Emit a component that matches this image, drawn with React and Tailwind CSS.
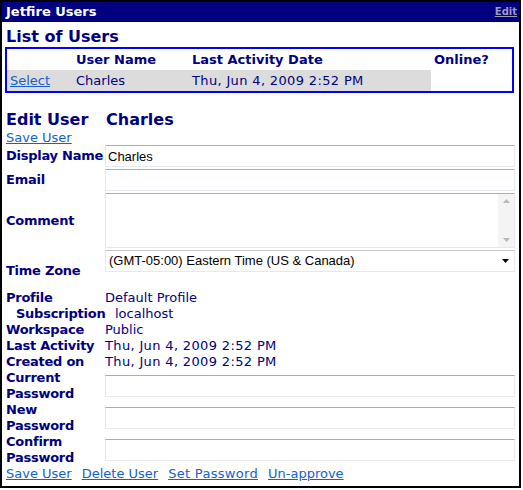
import React from "react";

const inputCls =
  "h-[22px] w-[410px] border border-[#e3e9ef] border-t-[#abadb3] bg-white px-[2px] font-['Liberation_Sans',Arial,sans-serif] text-[13px] text-black outline-none";

function Label({ children, className = "" }) {
  return (
    <div className={"w-[99px] shrink-0 whitespace-nowrap font-bold leading-[16px] tracking-[-0.25px] " + className}>
      {children}
    </div>
  );
}

function InputRow({ label, value = "", className = "" }) {
  return (
    <div className={"flex items-center " + className}>
      <Label>{label}</Label>
      <input className={inputCls} defaultValue={value} />
    </div>
  );
}

function InfoRow({ label, children, className = "" }) {
  return (
    <div className={"flex h-[16px] " + className}>
      <Label>{label}</Label>
      <div className="whitespace-nowrap">{children}</div>
    </div>
  );
}

export default function App() {
  return (
    <div className="w-[521px] h-[488px] border-2 border-black bg-white font-['DejaVu_Sans',Verdana,sans-serif] text-[13px] text-[#000080] overflow-hidden">
      <div className="h-[20px] bg-[#000080] border-b border-black flex items-center justify-between pl-[4px] pr-[2px]">
        <span className="text-white font-bold leading-[16px]">Jetfire Users</span>
        <a href="#" className="text-[10px] font-bold text-[#9c9cbc] underline leading-[12px]">Edit</a>
      </div>

      <div className="pl-[3px]">
        <h2 className="pl-[1px] mt-[5px] text-[16px] font-bold leading-[20px]">List of Users</h2>

        <table className="w-[509px] border-2 border-[#0000ff] border-separate border-spacing-0 table-fixed">
          <colgroup>
            <col className="w-[66px]" />
            <col className="w-[116px]" />
            <col className="w-[242px]" />
            <col />
          </colgroup>
          <thead>
            <tr className="h-[21px]">
              <th className="p-0 pl-[3px]"></th>
              <th className="p-0 pl-[3px] text-left font-bold whitespace-nowrap">User Name</th>
              <th className="p-0 pl-[3px] text-left font-bold whitespace-nowrap">Last Activity Date</th>
              <th className="p-0 pl-[3px] text-left font-bold whitespace-nowrap">Online?</th>
            </tr>
          </thead>
          <tbody>
            <tr className="h-[21px]">
              <td className="p-0 pl-[3px] bg-[#dcdcdc]">
                <a href="#" className="text-[#1560d0] underline">Select</a>
              </td>
              <td className="p-0 pl-[3px] bg-[#dcdcdc]">Charles</td>
              <td className="p-0 pl-[3px] bg-[#dcdcdc] whitespace-nowrap tracking-[0.35px]">Thu, Jun 4, 2009 2:52 PM</td>
              <td className="p-0"></td>
            </tr>
          </tbody>
        </table>

        <div className="pl-[1px]">
          <div className="flex mt-[17px] text-[16px] font-bold leading-[20px]">
            <div className="w-[100px] shrink-0 whitespace-nowrap">Edit User</div>
            <div>Charles</div>
          </div>
          <div className="leading-[15px] h-[15px]">
            <a href="#" className="text-[#1560d0] underline">Save User</a>
          </div>

          <div className="flex flex-col gap-[2px]">
            <InputRow label="Display Name" value="Charles" />
            <InputRow label="Email" />
            <div className="flex items-center">
              <Label>Comment</Label>
              <div className="h-[55px] w-[410px] flex border border-[#e3e9ef] border-t-[#abadb3] bg-white">
                <textarea className="flex-1 resize-none outline-none font-['Liberation_Sans',Arial,sans-serif] text-[13px] text-black"></textarea>
                <div className="w-[16px] bg-[#f4f4f4] flex flex-col justify-between items-center py-[5px]">
                  <svg width="7" height="4" viewBox="0 0 7 4"><path d="M0 4 L3.5 0 L7 4 Z" fill="#b8b8b8" /></svg>
                  <svg width="7" height="4" viewBox="0 0 7 4"><path d="M0 0 L3.5 4 L7 0 Z" fill="#b8b8b8" /></svg>
                </div>
              </div>
            </div>
            <div className="flex h-[40px]">
              <Label className="self-center pt-[2px]">Time Zone</Label>
              <div className="h-[22px] w-[410px] flex items-center justify-between border border-[#e3e9ef] border-t-[#c4c6cc] bg-white pl-[3px] pr-[5px] font-['Liberation_Sans',Arial,sans-serif] text-[13px] text-black">
                <span className="whitespace-nowrap">(GMT-05:00) Eastern Time (US &amp; Canada)</span>
                <svg width="7" height="4" viewBox="0 0 7 4"><path d="M0 0 L3.5 4 L7 0 Z" fill="#000" /></svg>
              </div>
            </div>
          </div>

          <div className="leading-[16px]">
            <InfoRow label="Profile">Default Profile</InfoRow>
            <InfoRow label="Subscription" className="pl-[10px]">localhost</InfoRow>
            <InfoRow label="Workspace">Public</InfoRow>
            <InfoRow label="Last Activity"><span className="tracking-[0.35px]">Thu, Jun 4, 2009 2:52 PM</span></InfoRow>
            <InfoRow label="Created on"><span className="tracking-[0.35px]">Thu, Jun 4, 2009 2:52 PM</span></InfoRow>
          </div>

          <InputRow label={<>Current<br />Password</>} className="h-[32px]" />
          <InputRow label={<>New<br />Password</>} className="h-[32px]" />
          <InputRow label={<>Confirm<br />Password</>} className="h-[32px]" />

          <div className="flex gap-[10px] leading-[16px] whitespace-nowrap">
            <a href="#" className="text-[#1560d0] underline">Save User</a>
            <a href="#" className="text-[#1560d0] underline">Delete User</a>
            <a href="#" className="text-[#1560d0] underline tracking-[0.3px]">Set Password</a>
            <a href="#" className="text-[#1560d0] underline">Un-approve</a>
          </div>
        </div>
      </div>
    </div>
  );
}
